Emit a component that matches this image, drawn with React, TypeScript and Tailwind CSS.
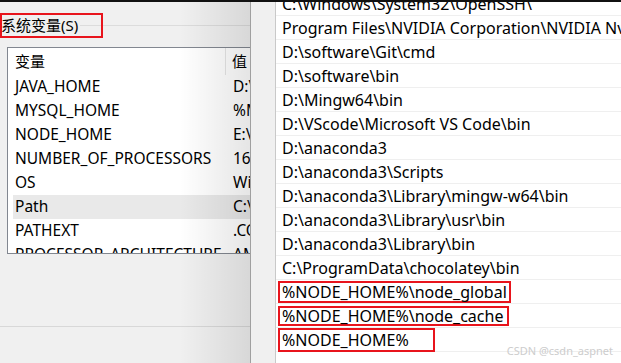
const SYS_VARS = [
  { name: 'JAVA_HOME', value: 'D:\\' },
  { name: 'MYSQL_HOME', value: '%M' },
  { name: 'NODE_HOME', value: 'E:\\' },
  { name: 'NUMBER_OF_PROCESSORS', value: '16' },
  { name: 'OS', value: 'Wi' },
  { name: 'Path', value: 'C:\\' },
  { name: 'PATHEXT', value: '.CO' },
  { name: 'PROCESSOR_ARCHITECTURE', value: 'AM' },
];

// box: [width, height] of the red annotation around the entry
const PATH_ITEMS: { text: string; box?: [number, number] }[] = [
  { text: 'C:\\Windows\\System32\\OpenSSH\\' },
  { text: 'Program Files\\NVIDIA Corporation\\NVIDIA NvD' },
  { text: 'D:\\software\\Git\\cmd' },
  { text: 'D:\\software\\bin' },
  { text: 'D:\\Mingw64\\bin' },
  { text: 'D:\\VScode\\Microsoft VS Code\\bin' },
  { text: 'D:\\anaconda3' },
  { text: 'D:\\anaconda3\\Scripts' },
  { text: 'D:\\anaconda3\\Library\\mingw-w64\\bin' },
  { text: 'D:\\anaconda3\\Library\\usr\\bin' },
  { text: 'D:\\anaconda3\\Library\\bin' },
  { text: 'C:\\ProgramData\\chocolatey\\bin' },
  { text: '%NODE_HOME%\\node_global', box: [233, 22] },
  { text: '%NODE_HOME%\\node_cache', box: [231, 20] },
  { text: '%NODE_HOME%', box: [157, 24] },
  { text: '' },
];

const FONT = "font-['Noto_Sans','Noto_Sans_CJK_SC',sans-serif]";

function SystemVars() {
  return (
    <div className="relative w-[250px] shrink-0 flex flex-col overflow-hidden">
      <div className="mt-[11px] flex items-center h-[25px]">
        <div className="w-[103px] h-[25px] border-2 border-[#e8141c] flex items-center shrink-0">
          <span className="text-[15px] leading-none text-black -ml-[1px] whitespace-nowrap">系统变量(S)</span>
          <div className="flex-1 h-px bg-[#dcdcdc] ml-[2px]" />
        </div>
        <div className="flex-1 h-px bg-[#dcdcdc]" />
      </div>

      <div className="mt-[9px] ml-[7px] w-[260px] h-[207px] shrink-0 border border-r-0 border-[#828790] bg-white overflow-hidden">
        <div className="flex h-[27px] items-center text-[15px] text-black">
          <div className="w-[218px] shrink-0 h-full pl-[7px] flex items-center border-r border-[#e5e5e5]">变量</div>
          <div className="pl-[6px]">值</div>
        </div>
        {SYS_VARS.map(v => (
          <div
            key={v.name}
            className={`ml-[5px] h-[24px] flex items-center text-[15.5px] text-black whitespace-nowrap ${v.name === 'Path' ? 'bg-[#e9e9e9]' : ''}`}
          >
            <div className="w-[220px] shrink-0 pl-[2px]">{v.name}</div>
            <div>{v.value}</div>
          </div>
        ))}
      </div>

      <div className="mt-[72px] h-px bg-[#d8d8d8]" />

      {/* shadow cast by the edit dialog */}
      <div className="pointer-events-none absolute inset-0 bg-[linear-gradient(to_right,rgba(0,0,0,0)_72%,rgba(0,0,0,0.1))]" />
    </div>
  );
}

function PathList() {
  return (
    <div className="relative flex-1 bg-white overflow-hidden">
      <div className="-mt-[10px]">
        {PATH_ITEMS.map((p, i) => (
          <div key={i} className="h-[24px] border-b border-[#efefef] flex items-center pl-[2px] text-[16px] text-black whitespace-nowrap">
            {p.box ? (
              <span
                className="border-2 border-[#e8141c] pl-[2px] flex items-center"
                style={{ width: p.box[0], height: p.box[1] }}
              >
                {p.text}
              </span>
            ) : (
              <span className="pl-[4px]">{p.text}</span>
            )}
          </div>
        ))}
      </div>
      <div className="absolute right-[8px] bottom-[4px] text-[11px] text-[#cdcdcd] font-['Noto_Sans',sans-serif]">
        CSDN @csdn_aspnet
      </div>
    </div>
  );
}

export default function App() {
  return (
    <div className={`w-[621px] h-[363px] overflow-hidden bg-[#f0f0f0] flex flex-col ${FONT}`}>
      <div className="h-[2px] bg-[#111] shrink-0" />
      <div className="flex flex-1 min-h-0">
        <SystemVars />
        <div className="w-px bg-[#a0a0a0] shrink-0" />
        <div className="w-[24px] bg-[#f0f0f0] shrink-0" />
        <div className="w-px bg-[#c9c9c9] shrink-0" />
        <PathList />
      </div>
    </div>
  );
}
